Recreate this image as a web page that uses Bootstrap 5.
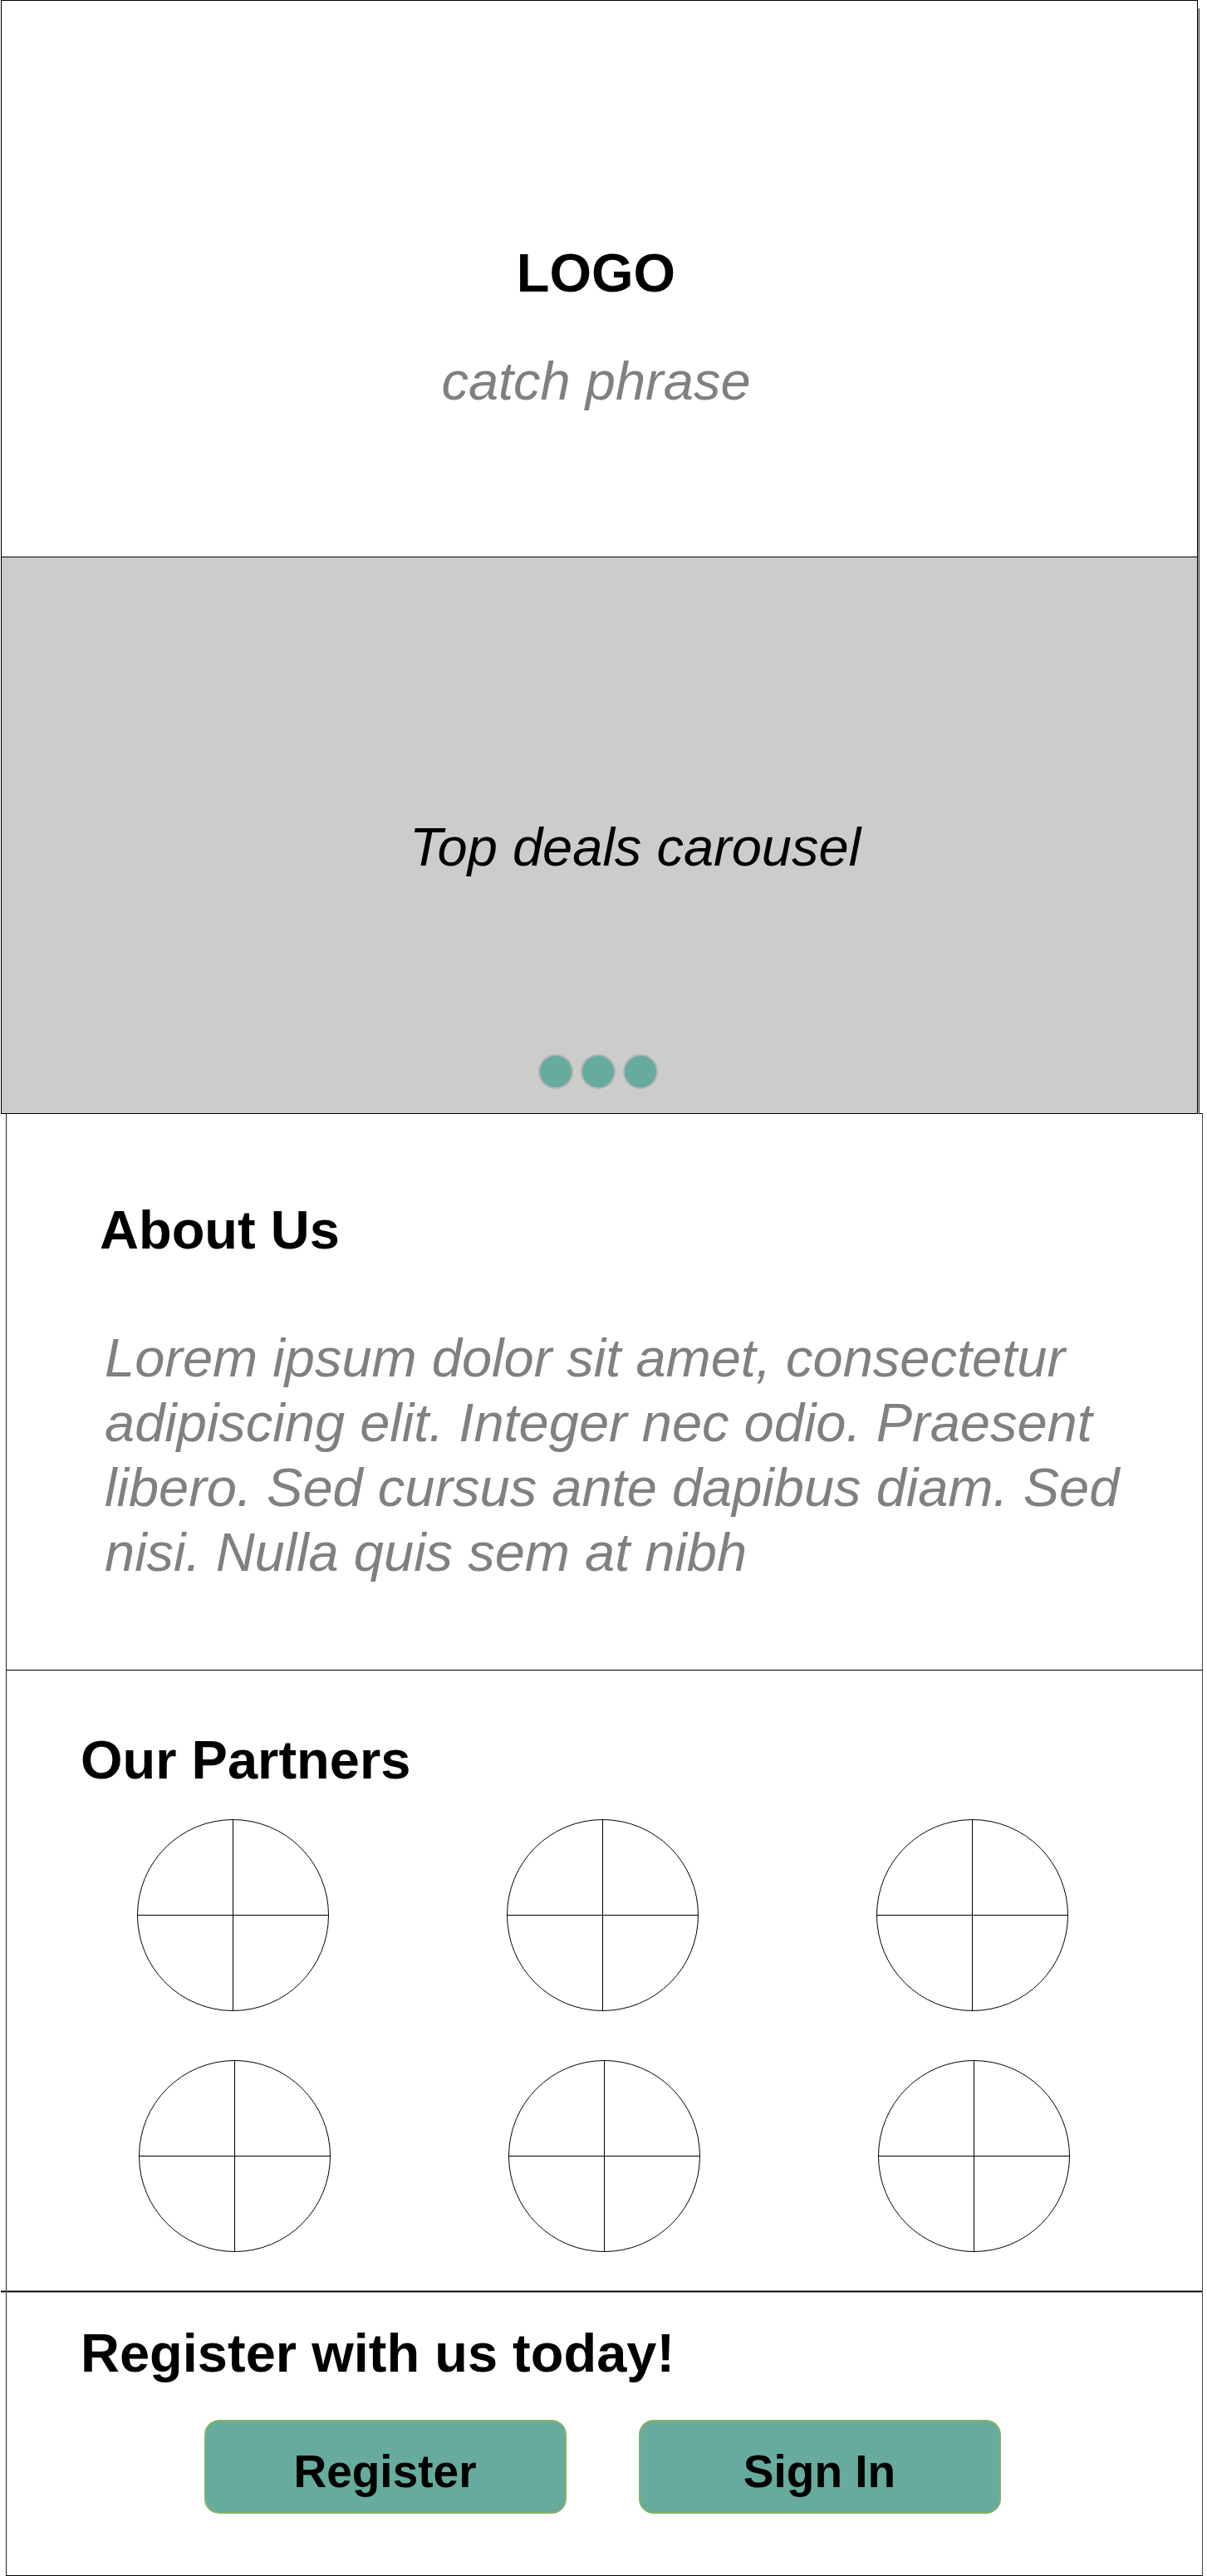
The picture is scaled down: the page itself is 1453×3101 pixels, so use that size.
<!DOCTYPE html>
<html lang="en">
<head>
<meta charset="utf-8">
<meta name="viewport" content="width=device-width, initial-scale=1">
<title>Landing page wireframe</title>
<link rel="stylesheet" href="https://cdn.jsdelivr.net/npm/bootstrap@5.3.0/dist/css/bootstrap.min.css">
<style>
  body { font-family: "Liberation Sans", Arial, sans-serif; font-size: 65px; line-height: 78px; color: #000; background: #fff; }
  h1, h2, p { font-size: 65px; line-height: 78px; margin: 0; }
  h1, h2 { font-weight: 700; }
  .muted-copy { color: #808080; }

  /* upper frame: hero and carousel, with a drop edge on the right */
  .upper-frame { margin: 0 11px 0 1px; position: relative; }
  .upper-frame::after { content: ""; position: absolute; top: 10px; bottom: 0; left: 100%; width: 2px; background: #b3b3b3; border-right: 1px solid #36393d; }
  .panel { border: 1px solid #000; border-bottom: 0; }
  .hero { padding: 289px 8px 172px 0; gap: 52px; }
  .panel.deals { background: #ccc; padding: 310px 0 29px; gap: 210px; border-bottom: 1px solid #000; }
  .deals-title { padding-left: 86px; }
  .dot { width: 42px; height: 42px; padding: 0; border: 2px solid #b3b3b3; border-radius: 50%; background: #67ab9f; }
  .dots { gap: 9px; padding-right: 3px; }

  /* lower frame: about, partners, registration; shares its top line with the carousel */
  .lower-frame { margin: -1px 5px 0 7px; }
  .lower-frame .panel { border-right-color: #444; border-left-color: #222; }
  .about { padding: 101px 90px 102px 112px; }
  .about h2 { margin-bottom: 76px; }
  .about p { padding-left: 6px; }
  .partners { padding: 69px 0 46px; }
  .section-title { padding-left: 89px; }
  .partner-grid { margin-top: 32px; gap: 59px; }
  .partner-line { padding: 0 54px 0 50px; }
  .partner-line-shifted { padding: 0 52px; }
  .partner-logo { width: 231px; height: 231px; display: block; }
  .divider { height: 3px; margin-left: -6px; background: linear-gradient(#888 1px, #000 1px, #000 2px, #888 2px); }
  .panel.signup { border-top: 0; border-bottom: 1px solid #000; padding: 34px 0 74px; }
  .actions { margin-top: 41px; gap: 87px; padding-right: 5px; }
  .btn-action { width: 436px; height: 113px; padding: 10px 0 0; border: 2px solid #82b366; border-radius: 18px; background: #67ab9f; color: #000; font-size: 55px; line-height: 64px; font-weight: 700; }
  .btn-action:hover { background: #5a9c91; border-color: #82b366; color: #000; }
</style>
<script src="https://cdn.jsdelivr.net/npm/bootstrap@5.3.0/dist/js/bootstrap.bundle.min.js"></script>
</head>
<body>
<svg class="d-none" aria-hidden="true">
  <symbol id="placeholder" viewBox="0 0 231 231">
    <g fill="none" stroke="#000" stroke-width="1">
      <circle cx="115.5" cy="115.5" r="115"/>
      <path d="M115.5 0V231M0 115.5H231"/>
    </g>
  </symbol>
</svg>

<div class="upper-frame">
  <header class="panel hero d-flex flex-column align-items-center text-center">
    <h1>LOGO</h1>
    <p class="fst-italic muted-copy">catch phrase</p>
  </header>
  <section class="panel deals d-flex flex-column align-items-center">
    <p class="deals-title fst-italic">Top deals carousel</p>
    <div class="dots d-flex">
      <button type="button" class="dot" aria-label="Deal 1"></button>
      <button type="button" class="dot" aria-label="Deal 2"></button>
      <button type="button" class="dot" aria-label="Deal 3"></button>
    </div>
  </section>
</div>

<main class="lower-frame">
  <section class="panel about">
    <h2>About Us</h2>
    <p class="fst-italic muted-copy">Lorem ipsum dolor sit amet, consectetur adipiscing elit. Integer nec odio. Praesent libero. Sed cursus ante dapibus diam. Sed nisi. Nulla quis sem at nibh</p>
  </section>
  <section class="panel partners">
    <h2 class="section-title">Our Partners</h2>
    <div class="partner-grid d-flex flex-column">
      <div class="partner-line">
        <div class="row g-0">
          <div class="col-4 d-flex justify-content-center"><svg class="partner-logo"><use href="#placeholder"/></svg></div>
          <div class="col-4 d-flex justify-content-center"><svg class="partner-logo"><use href="#placeholder"/></svg></div>
          <div class="col-4 d-flex justify-content-center"><svg class="partner-logo"><use href="#placeholder"/></svg></div>
        </div>
      </div>
      <div class="partner-line-shifted">
        <div class="row g-0">
          <div class="col-4 d-flex justify-content-center"><svg class="partner-logo"><use href="#placeholder"/></svg></div>
          <div class="col-4 d-flex justify-content-center"><svg class="partner-logo"><use href="#placeholder"/></svg></div>
          <div class="col-4 d-flex justify-content-center"><svg class="partner-logo"><use href="#placeholder"/></svg></div>
        </div>
      </div>
    </div>
  </section>
  <div class="divider"></div>
  <section class="panel signup">
    <h2 class="section-title">Register with us today!</h2>
    <div class="actions d-flex justify-content-center">
      <button type="button" class="btn btn-action">Register</button>
      <button type="button" class="btn btn-action">Sign In</button>
    </div>
  </section>
</main>
</body>
</html>
